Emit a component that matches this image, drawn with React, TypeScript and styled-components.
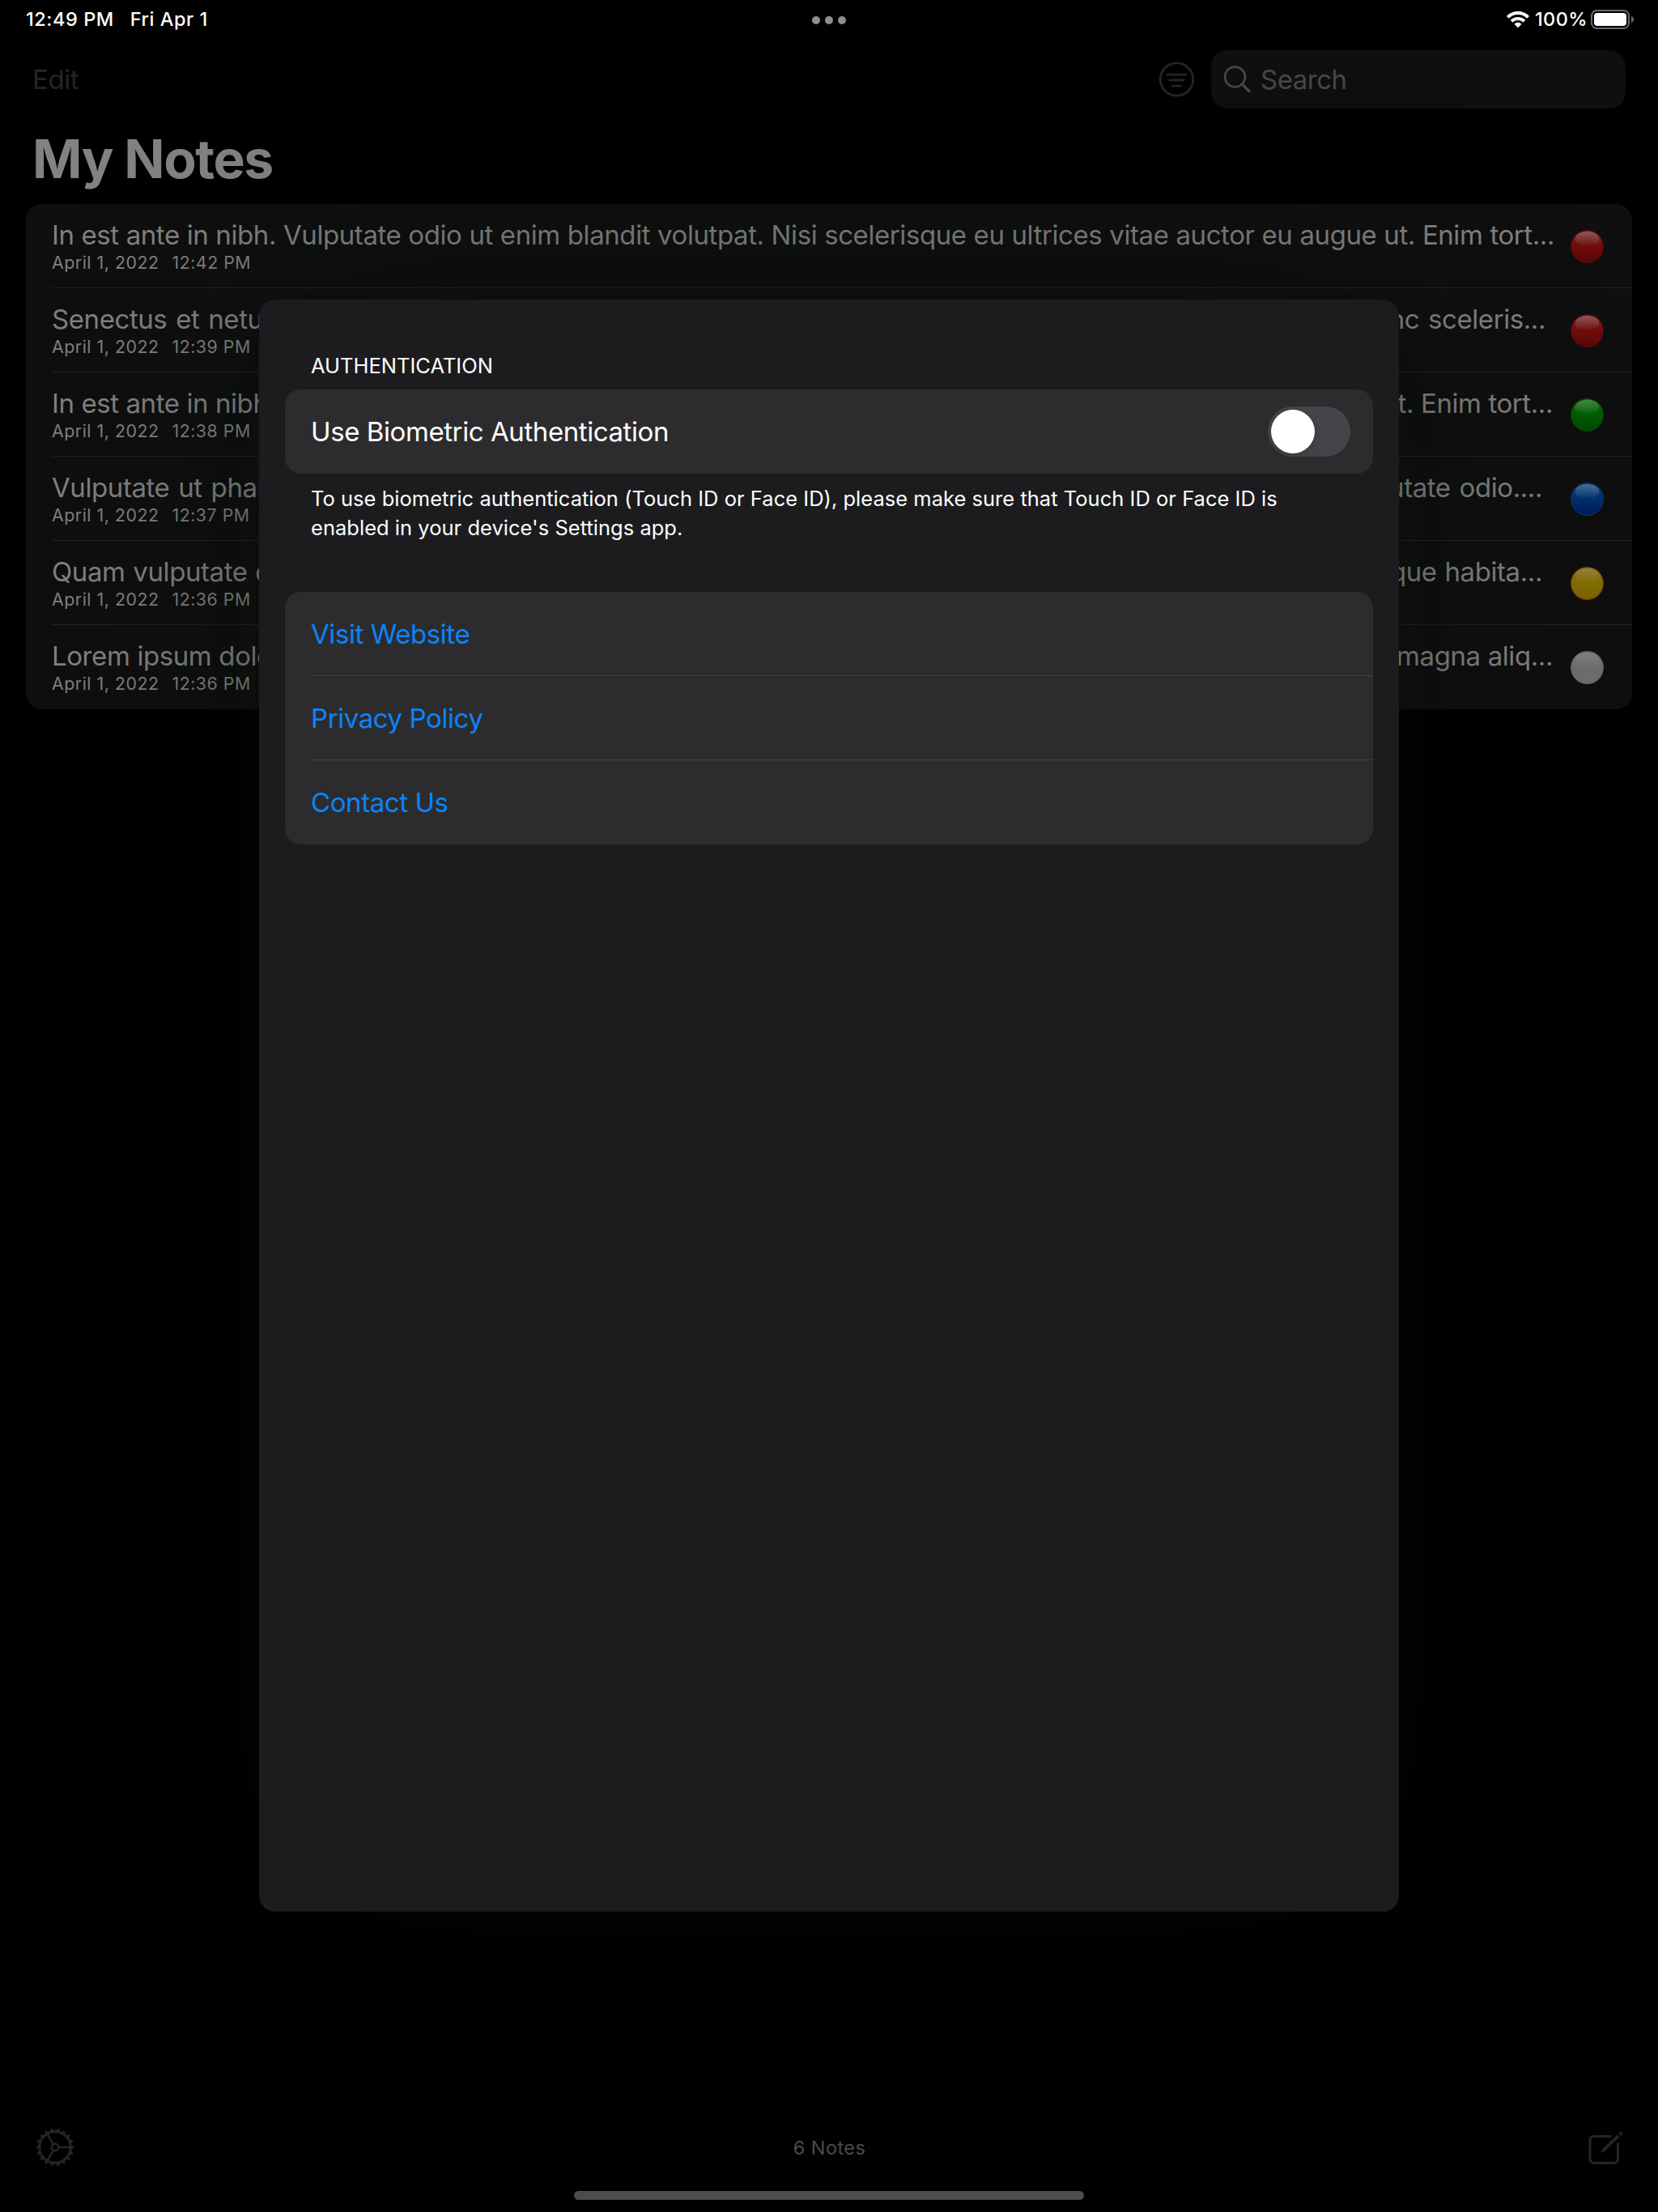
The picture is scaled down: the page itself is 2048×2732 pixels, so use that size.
import React from "react";
import styled, { createGlobalStyle } from "styled-components";

const GlobalStyle = createGlobalStyle`
  *, *::before, *::after { box-sizing: border-box; }
  body {
    margin: 0;
    background: #000;
    color: #fff;
    font-family: Inter, "Liberation Sans", sans-serif;
  }
`;

const Screen = styled.div`
  position: relative;
  display: flex;
  flex-direction: column;
  width: 2048px;
  height: 2732px;
  background: #000;
  overflow: hidden;
`;

/* ---------- status bar ---------- */

const StatusBar = styled.header`
  display: grid;
  grid-template-columns: 1fr auto 1fr;
  align-items: center;
  height: 47px;
  padding: 0 30px 0 32px;
  font-size: 23.5px;
  font-weight: 500;
  line-height: 47px;
  letter-spacing: 0.55px;
`;

const StatusLeft = styled.div`
  display: flex;
  gap: 20px;
`;

const MultitaskDots = styled.div`
  display: flex;
  gap: 6px;
  padding: 3px 2px 0 0;
`;

const Dot = styled.span`
  width: 10px;
  height: 10px;
  border-radius: 50%;
  background: #8e8e8e;
`;

const StatusRight = styled.div`
  display: flex;
  justify-content: flex-end;
  align-items: center;
`;

const BatteryLabel = styled.span`
  margin: 0 4px 0 7px;
  letter-spacing: 0.4px;
`;

/* ---------- page ---------- */

const NavBar = styled.nav`
  display: flex;
  align-items: center;
  height: 72px;
  margin-top: 15px;
  padding: 0 40px;
`;

const EditButton = styled.button`
  margin-right: auto;
  padding: 0;
  border: 0;
  background: none;
  color: #252525;
  font: inherit;
  font-size: 33px;
  line-height: 40px;
  letter-spacing: -0.4px;
`;

const FilterButton = styled.span`
  display: flex;
  margin-right: 20px;
`;

const SearchField = styled.div`
  display: flex;
  align-items: center;
  gap: 12px;
  width: 512px;
  height: 72px;
  padding-left: 15px;
  border-radius: 20px;
  background: #0f0f10;
  color: #474749;
  font-size: 33px;
  letter-spacing: -0.5px;
`;

const PageTitle = styled.h1`
  margin: 22px 0 16px;
  padding-left: 40px;
  color: #828282;
  font-size: 66px;
  font-weight: 700;
  line-height: 80px;
  letter-spacing: -1.4px;
`;

const NoteList = styled.ul`
  margin: 0 32px;
  padding: 0;
  border-radius: 20px;
  background: #0f0f10;
  list-style: none;
  overflow: hidden;
`;

const NoteRow = styled.li`
  display: flex;
  justify-content: space-between;
  height: 104px;
  margin-left: 32px;
  padding: 18px 35px 0 0;
  border-bottom: 1px solid #222223;

  &:last-child {
    border-bottom-color: transparent;
  }
`;

const NoteTitle = styled.div<{ $width: number }>`
  width: ${(p) => p.$width}px;
  color: #808080;
  font-size: 33px;
  line-height: 40px;
  letter-spacing: -0.42px;
  text-align-last: justify;
  white-space: nowrap;
`;

const NoteMeta = styled.div`
  display: flex;
  gap: 16px;
  color: #808080;
  font-size: 21.3px;
  line-height: 28px;
  letter-spacing: 0.53px;
`;

const Marker = styled.svg`
  display: block;
  flex: none;
  width: 41px;
  height: 41px;
  margin-top: 14px;
`;

const Toolbar = styled.footer`
  display: grid;
  grid-template-columns: 1fr auto 1fr;
  align-items: center;
  height: 60px;
  margin-top: auto;
  padding: 0 43px 0 43px;
  color: #4b4b4b;
`;

const NoteCount = styled.span`
  padding-left: 1px;
  font-size: 23.5px;
  letter-spacing: 0.45px;
`;

const ComposeSlot = styled.span`
  display: flex;
  justify-content: flex-end;
`;

const HomeIndicator = styled.div`
  width: 630px;
  height: 11px;
  margin: 24px auto 15px;
  border-radius: 6px;
  background: #4c4c4c;
`;

/* ---------- settings sheet ---------- */

const Sheet = styled.section`
  position: absolute;
  top: 370px;
  left: 320px;
  width: 1408px;
  height: 1991px;
  padding: 64px 32px 0;
  border-radius: 20px;
  background: #1c1c1e;
  box-shadow: 0 0 300px rgba(2, 16, 0, 0.42);
`;

const SectionHeader = styled.h2`
  margin: 0 0 11px;
  padding-left: 32px;
  font-size: 25.5px;
  font-weight: 400;
  line-height: 36px;
`;

const Card = styled.div`
  border-radius: 20px;
  background: #2c2c2e;
  overflow: hidden;
`;

const CardRow = styled.div<{ $link?: boolean }>`
  display: flex;
  align-items: center;
  justify-content: space-between;
  height: 104px;
  margin-left: 32px;
  padding-right: 28px;
  color: ${(p) => (p.$link ? "#0a84ff" : "#fff")};
  font-size: 33px;
  letter-spacing: -0.42px;

  & + & {
    box-shadow: 0 -1px 0 #414144;
  }
`;

const Switch = styled.span`
  display: flex;
  align-items: center;
  width: 102px;
  height: 62px;
  padding-left: 4px;
  border-radius: 31px;
  background: #454549;
  overflow: hidden;
`;

const Knob = styled.span`
  width: 54px;
  height: 54px;
  border-radius: 50%;
  background: #fff;
  box-shadow: 0 5px 14px rgba(0, 0, 0, 0.16);
`;

const Footnote = styled.p`
  margin: 13px 0 61px;
  padding: 0 100px 0 32px;
  font-size: 25.5px;
  line-height: 36px;
  letter-spacing: 0.02px;
`;

/* ---------- drawings ---------- */

const WifiIcon = () => (
  <svg width="28" height="20" viewBox="0 0 28 20" fill="#fff">
    <path d="M14 0c5.2 0 10 2 13.6 5.4.3.3.3.7 0 1l-1.900 1.900c-.3.3-.7.3-1 0C21.800 5.600 18 4.100 14 4.100S6.200 5.600 3.300 8.300c-.3.3-.7.3-1 0L.4 6.400c-.3-.3-.3-.7 0-1C4 2 8.800 0 14 0Z" />
    <path d="M14 6.900c3.400 0 6.500 1.300 8.800 3.400.3.3.3.7 0 1l-1.900 1.900c-.3.3-.7.3-1 0C18.300 11.800 16.200 11 14 11s-4.300.8-5.900 2.200c-.3.3-.7.3-1 0l-1.900-1.900c-.3-.3-.3-.7 0-1C7.500 8.200 10.600 6.900 14 6.900Z" />
    <path d="M14 13.700c1.500 0 2.900.6 4 1.500.3.3.3.7 0 1l-3.500 3.500c-.3.3-.7.3-1 0L10 16.200c-.3-.3-.3-.7 0-1 1.100-.9 2.500-1.500 4-1.500Z" />
  </svg>
);

const BatteryIcon = () => (
  <svg width="53" height="24" viewBox="0 0 53 24">
    <rect x="1" y="1" width="46" height="22" rx="6.500" fill="none" stroke="#6a6a6a" strokeWidth="2" />
    <rect x="4" y="4" width="40" height="16" rx="4" fill="#fff" />
    <path d="M50 8c1.900.7 3 2.200 3 4s-1.100 3.300-3 4Z" fill="#6a6a6a" />
  </svg>
);

const FilterIcon = () => (
  <svg width="44" height="44" viewBox="0 0 44 44" fill="none" stroke="#252525" strokeWidth="2.800" strokeLinecap="round">
    <circle cx="21.500" cy="22" r="20.200" />
    <path d="M10 16.200h23M13 23h17M16.500 30.200h10.300" />
  </svg>
);

const SearchIcon = () => (
  <svg width="34" height="34" viewBox="0 0 34 34" fill="none" stroke="#474749" strokeLinecap="round">
    <circle cx="14.500" cy="14" r="12.400" strokeWidth="2.800" />
    <path d="M23.700 23.400 32 31.600" strokeWidth="3.400" />
  </svg>
);

const teeth = Array.from({ length: 18 }, (_, i) => i * 20);

const GearIcon = () => (
  <svg width="50" height="50" viewBox="-25 -25 50 50" fill="none" stroke="#252525" strokeWidth="2.500">
    <circle r="19.300" strokeWidth="2.900" />
    <circle r="4.200" />
    {[0, 120, 240].map((a) => (
      <path key={a} d="M4.500 0H19" transform={`rotate(${a})`} />
    ))}
    {teeth.map((a) => (
      <path key={a} d="M20-2.600 23-1.100Q24.200 0 23 1.100L20 2.600Z" fill="#252525" stroke="none" transform={`rotate(${a})`} />
    ))}
  </svg>
);

const ComposeIcon = () => (
  <svg width="44" height="44" viewBox="0 0 44 44" fill="none" stroke="#252525">
    <path d="M29.500 8.500H8.300C5 8.500 3 10.500 3 13.800V36.200C3 39.500 5 41.500 8.300 41.500H32.200C35.500 41.500 37.500 39.500 37.500 36.200V16.500" strokeWidth="2.900" />
    <path d="M36.400 6.700 39.300 9.600 20.500 27.300 16 29.300 18 24.700Z" fill="#252525" stroke="none" />
    <circle cx="41" cy="5.200" r="2.100" fill="#252525" stroke="none" />
  </svg>
);

type Tone = { id: string; edge: string; shine: string; top: string; mid: string; low: string };

const tones: Record<string, Tone> = {
  red: { id: "red", edge: "#590a0a", shine: "#8f5656", top: "#741d1d", mid: "#720c0c", low: "#5a0808" },
  green: { id: "green", edge: "#004800", shine: "#428a42", top: "#0d680d", mid: "#005c00", low: "#004800" },
  blue: { id: "blue", edge: "#063563", shine: "#4a6f98", top: "#083d76", mid: "#00306e", low: "#001a58" },
  yellow: { id: "yellow", edge: "#6e4600", shine: "#94813f", top: "#8a6a0e", mid: "#836d00", low: "#7d6200" },
  white: { id: "white", edge: "#636363", shine: "#808080", top: "#757575", mid: "#6d6d6d", low: "#6e6e6e" },
};

const ColorMarker = ({ tone }: { tone: Tone }) => (
  <Marker viewBox="0 0 41 41">
    <defs>
      <linearGradient id={`body-${tone.id}`} x1="0" y1="0" x2="0" y2="1">
        <stop offset="0.08" stopColor={tone.top} />
        <stop offset="0.5" stopColor={tone.mid} />
        <stop offset="1" stopColor={tone.low} />
      </linearGradient>
      <linearGradient id={`shine-${tone.id}`} x1="0" y1="0" x2="0" y2="1">
        <stop offset="0" stopColor={tone.shine} />
        <stop offset="1" stopColor={tone.shine} stopOpacity="0" />
      </linearGradient>
    </defs>
    <circle cx="20.500" cy="20.500" r="20.500" fill={tone.edge} />
    <circle cx="20.500" cy="20.500" r="19.300" fill={`url(#body-${tone.id})`} />
    <ellipse cx="20.500" cy="11" rx="15" ry="9.200" fill={`url(#shine-${tone.id})`} />
  </Marker>
);

/* ---------- data ---------- */

const notes = [
  { title: "In est ante in nibh. Vulputate odio ut enim blandit volutpat. Nisi scelerisque eu ultrices vitae auctor eu augue ut. Enim tort...", width: 1856, time: "12:42 PM", tone: "red" },
  { title: "Senectus et netus et malesuada fames ac turpis egestas. Tellus integer feugiat scelerisque varius morbi nunc sceleris...", width: 1845, time: "12:39 PM", tone: "red" },
  { title: "In est ante in nibh. Vulputate odio ut enim blandit volutpat. Nisi scelerisque eu ultrices vitae auctor eu augue ut. Enim tort...", width: 1854, time: "12:38 PM", tone: "green" },
  { title: "Vulputate ut pharetra sit amet aliquam id diam lacinia. Egestas fringilla phasellus faucibus scelerisque. Vulputate odio....", width: 1841, time: "12:37 PM", tone: "blue" },
  { title: "Quam vulputate dignissim suspendisse in est ante in nibh mollis. Morbi tristique senectus et netus. Pellentesque habita...", width: 1841, time: "12:36 PM", tone: "yellow" },
  { title: "Lorem ipsum dolor sit amet, consectetur adipiscing elit, sed do eiusmod tempor incididunt ut labore et dolore magna aliq...", width: 1854, time: "12:36 PM", tone: "white" },
];

const links = ["Visit Website", "Privacy Policy", "Contact Us"];

export default function App() {
  return (
    <>
      <GlobalStyle />
      <Screen>
        <StatusBar>
          <StatusLeft>
            <span>12:49 PM</span>
            <span>Fri Apr 1</span>
          </StatusLeft>
          <MultitaskDots>
            <Dot />
            <Dot />
            <Dot />
          </MultitaskDots>
          <StatusRight>
            <WifiIcon />
            <BatteryLabel>100%</BatteryLabel>
            <BatteryIcon />
          </StatusRight>
        </StatusBar>

        <NavBar>
          <EditButton>Edit</EditButton>
          <FilterButton>
            <FilterIcon />
          </FilterButton>
          <SearchField>
            <SearchIcon />
            Search
          </SearchField>
        </NavBar>

        <PageTitle>My Notes</PageTitle>

        <NoteList>
          {notes.map((note) => (
            <NoteRow key={note.time + note.tone}>
              <div>
                <NoteTitle $width={note.width}>{note.title}</NoteTitle>
                <NoteMeta>
                  <span>April 1, 2022</span>
                  <span>{note.time}</span>
                </NoteMeta>
              </div>
              <ColorMarker tone={tones[note.tone]} />
            </NoteRow>
          ))}
        </NoteList>

        <Toolbar>
          <GearIcon />
          <NoteCount>6 Notes</NoteCount>
          <ComposeSlot>
            <ComposeIcon />
          </ComposeSlot>
        </Toolbar>
        <HomeIndicator />

        <Sheet>
          <SectionHeader>AUTHENTICATION</SectionHeader>
          <Card>
            <CardRow>
              Use Biometric Authentication
              <Switch>
                <Knob />
              </Switch>
            </CardRow>
          </Card>
          <Footnote>
            To use biometric authentication (Touch ID or Face ID), please make sure that Touch ID or Face ID is enabled in your
            device's Settings app.
          </Footnote>
          <Card>
            {links.map((label) => (
              <CardRow key={label} $link>
                {label}
              </CardRow>
            ))}
          </Card>
        </Sheet>
      </Screen>
    </>
  );
}
